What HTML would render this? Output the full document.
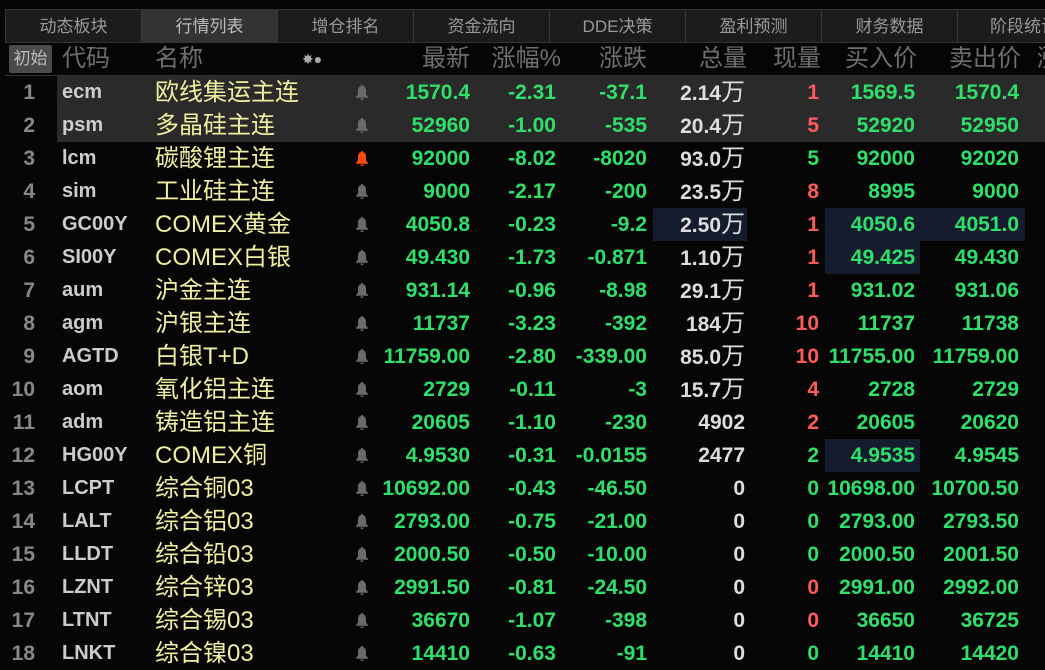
<!DOCTYPE html><html><head><meta charset="utf-8"><style>
body{margin:0;width:1045px;height:670px;background:#060606;overflow:hidden;font-family:"Liberation Sans","Noto Sans CJK SC",sans-serif;position:relative}
.tabs{position:absolute;top:9px;left:5px;right:0;height:33px;border-top:1px solid #333;border-left:1px solid #333;background:#1c1c1c}
.tab{position:absolute;top:0;height:32px;width:135px;border-right:1px solid #3a3a3a;color:#999;font-size:17px;text-align:center;line-height:33px;border-bottom:1px solid #333}
.tab.a{background:#333;color:#bbb}
.hdr{position:absolute;top:43px;left:5px;right:0;height:32px;background:#050505;border-bottom:1px solid #333;color:#6e6e6e;font-size:24px}
.hdr span{position:absolute;top:0;line-height:32px;white-space:nowrap}
.init{position:absolute;left:4px;top:2px;width:43px;height:28px;background:#4a4a4a;color:#bbb;font-size:17px;line-height:28px;text-align:center;border-radius:2px}
.row{position:absolute;left:0;right:0;height:33px;font-size:21px;font-weight:bold;color:#2ee06a}
.row.g::before{content:"";position:absolute;left:57px;right:0;top:0;bottom:0;background:#2a2a2a}
.row span{position:absolute;top:0;line-height:33px;white-space:nowrap}
.n{left:0;width:35px;text-align:right;color:#888}
.cd{left:62px;color:#ccc;font-size:20px}
.nm{left:155px;color:#f0efa0;font-weight:normal;font-size:24px}
.row span.bl{left:355px;top:8px;width:14px;height:17px;line-height:0}
.bl svg{display:block}
.r1{right:575px}.r2{right:489px}.r3{right:398px}.r4{right:300px}.r5{right:226px}.r6{right:130px}.r7{right:26px}
.w{color:#ddd}.w i{font-style:normal;font-weight:normal;font-size:24px}
.red{color:#ff5a5a}
.hl{position:absolute;top:0;height:33px;background:#141c2e}
</style></head><body>
<div class="tabs">
<div class="tab" style="left:0">动态板块</div><div class="tab a" style="left:136px">行情列表</div><div class="tab" style="left:272px">增仓排名</div><div class="tab" style="left:408px">资金流向</div><div class="tab" style="left:544px">DDE决策</div><div class="tab" style="left:680px">盈利预测</div><div class="tab" style="left:816px">财务数据</div><div class="tab" style="left:952px;width:100px;text-align:left;padding-left:32px">阶段统计</div>
</div>
<div class="hdr"><div class="init">初始</div>
<span style="left:57px">代码</span><span style="left:150px">名称</span><span style="left:297px;font-size:14px;color:#aaa">✸●</span>
<span style="right:575px">最新</span><span style="right:484px">涨幅%</span><span style="right:398px">涨跌</span><span style="right:298px">总量</span><span style="right:224px">现量</span><span style="right:128px">买入价</span><span style="right:24px">卖出价</span><span style="left:1032px">涨</span></div>
<div id="rows"></div>
<script>
var d=[
["1","ecm","欧线集运主连","1570.4","-2.31","-37.1","2.14","万","1","r","1569.5","1570.4"],
["2","psm","多晶硅主连","52960","-1.00","-535","20.4","万","5","r","52920","52950"],
["3","lcm","碳酸锂主连","92000","-8.02","-8020","93.0","万","5","g","92000","92020"],
["4","sim","工业硅主连","9000","-2.17","-200","23.5","万","8","r","8995","9000"],
["5","GC00Y","COMEX黄金","4050.8","-0.23","-9.2","2.50","万","1","r","4050.6","4051.0"],
["6","SI00Y","COMEX白银","49.430","-1.73","-0.871","1.10","万","1","r","49.425","49.430"],
["7","aum","沪金主连","931.14","-0.96","-8.98","29.1","万","1","r","931.02","931.06"],
["8","agm","沪银主连","11737","-3.23","-392","184","万","10","r","11737","11738"],
["9","AGTD","白银T+D","11759.00","-2.80","-339.00","85.0","万","10","r","11755.00","11759.00"],
["10","aom","氧化铝主连","2729","-0.11","-3","15.7","万","4","r","2728","2729"],
["11","adm","铸造铝主连","20605","-1.10","-230","4902","","2","r","20605","20620"],
["12","HG00Y","COMEX铜","4.9530","-0.31","-0.0155","2477","","2","g","4.9535","4.9545"],
["13","LCPT","综合铜03","10692.00","-0.43","-46.50","0","","0","g","10698.00","10700.50"],
["14","LALT","综合铝03","2793.00","-0.75","-21.00","0","","0","g","2793.00","2793.50"],
["15","LLDT","综合铅03","2000.50","-0.50","-10.00","0","","0","g","2000.50","2001.50"],
["16","LZNT","综合锌03","2991.50","-0.81","-24.50","0","","0","r","2991.00","2992.00"],
["17","LTNT","综合锡03","36670","-1.07","-398","0","","0","r","36650","36725"],
["18","LNKT","综合镍03","14410","-0.63","-91","0","","0","g","14410","14420"]];
var h="",bell='<svg viewBox="0 0 14 16" width="14" height="17"><path d="M7 0.5c1 0 1.3.8 1.3 1.3C10.3 2.4 11 4 11 6.5V10l2 2.5v.8H1v-.8L3 10V6.5C3 4 3.7 2.4 5.7 1.8 5.7 1.3 6 .5 7 .5zM5.3 14h3.4c0 1-.8 1.6-1.7 1.6S5.3 15 5.3 14z" fill="COL"/></svg>';
d.forEach(function(r,i){
var t=76+i*33,hl="";
if(i==4)hl='<div class="hl" style="left:653px;width:94px"></div><div class="hl" style="left:825px;width:200px"></div>';
if(i==5||i==11)hl='<div class="hl" style="left:825px;width:95px"></div>';
h+='<div class="row'+(i<2?' g':'')+'" style="top:'+t+'px">'+hl+'<span class="n">'+r[0]+'</span><span class="cd">'+r[1]+'</span><span class="nm">'+r[2]+'</span><span class="bl">'+bell.replace("COL",i==2?"#ff4a10":"#6a6a6a")+'</span><span class="r1">'+r[3]+'</span><span class="r2">'+r[4]+'</span><span class="r3">'+r[5]+'</span><span class="r4 w">'+r[6]+(r[7]?'<i>万</i>':'')+'</span><span class="r5 '+(r[9]=="r"?"red":"")+'">'+r[8]+'</span><span class="r6">'+r[10]+'</span><span class="r7">'+r[11]+'</span></div>';
});
document.getElementById("rows").innerHTML=h;
</script>
</body></html>
